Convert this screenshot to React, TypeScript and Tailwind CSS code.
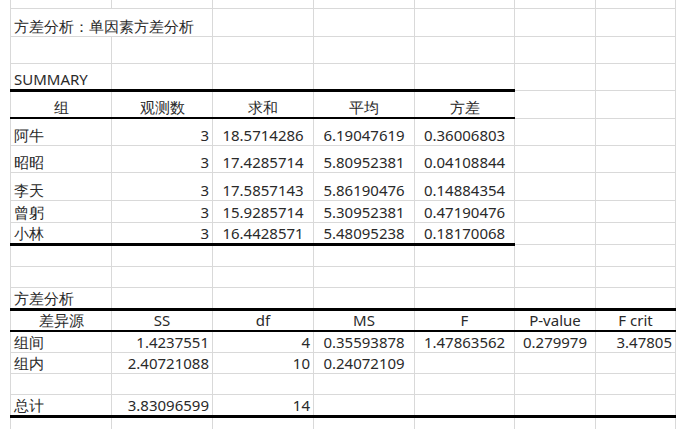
import React from "react";

const W = ["w-[101px]", "w-[101px]", "w-[101px]", "w-[101px]", "w-[100px]", "w-[81px]", "w-[80px]"];
type C = { t?: string; a?: "l" | "r" | "c" };
const L = (t: string): C => ({ t, a: "l" });
const R = (t: string): C => ({ t, a: "r" });
const M = (t: string): C => ({ t, a: "c" });

const rows: { h: string; c: C[]; b?: number; bw?: 1 | 2 }[] = [
  { h: "h-[8px]", c: [] },
  { h: "h-[28px]", c: [L("方差分析：单因素方差分析")] },
  { h: "h-[27px]", c: [] },
  { h: "h-[27px]", c: [L("SUMMARY")], b: 5, bw: 2 },
  { h: "h-[28px]", c: [M("组"), M("观测数"), M("求和"), M("平均"), M("方差")], b: 5, bw: 1 },
  { h: "h-[27px]", c: [L("阿牛"), R("3"), M("18.5714286"), M("6.19047619"), M("0.36006803")] },
  { h: "h-[27px]", c: [L("昭昭"), R("3"), M("17.4285714"), M("5.80952381"), M("0.04108844")] },
  { h: "h-[28px]", c: [L("李天"), R("3"), M("17.5857143"), M("5.86190476"), M("0.14884354")] },
  { h: "h-[22px]", c: [L("曾躬"), R("3"), M("15.9285714"), M("5.30952381"), M("0.47190476")] },
  { h: "h-[22px]", c: [L("小林"), R("3"), M("16.4428571"), M("5.48095238"), M("0.18170068")], b: 5, bw: 2 },
  { h: "h-[22px]", c: [] },
  { h: "h-[21px]", c: [] },
  { h: "h-[22px]", c: [L("方差分析")], b: 7, bw: 2 },
  { h: "h-[22px]", c: [M("差异源"), M("SS"), M("df"), M("MS"), M("F"), M("P-value"), M("F crit")], b: 7, bw: 1 },
  { h: "h-[21px]", c: [L("组间"), R("1.4237551"), R("4"), M("0.35593878"), M("1.47863562"), M("0.279979"), R("3.47805")] },
  { h: "h-[21px]", c: [L("组内"), R("2.40721088"), R("10"), M("0.24072109")] },
  { h: "h-[21px]", c: [] },
  { h: "h-[22px]", c: [L("总计"), R("3.83096599"), R("14")], b: 7, bw: 2 },
  { h: "h-[13px]", c: [] },
];

export default function App() {
  return (
    <div className="w-[685px] h-[429px] overflow-hidden bg-white text-[15px] text-[#2a2a2a] font-['Liberation_Sans','Noto_Sans_CJK_SC',sans-serif]">
      <table className="ml-[10px] border-collapse table-fixed w-[665px]">
        <colgroup>
          {W.map((w, i) => (
            <col key={i} className={w} />
          ))}
        </colgroup>
        <tbody>
          {rows.map((r, ri) => (
            <tr key={ri} className={r.h}>
              {W.map((_, ci) => {
                const cell = r.c[ci];
                const thick = r.b && ci < r.b;
                const over = ri === 1 && ci === 0;
                if (ri === 1 && ci === 1) return null;
                return (
                  <td
                    key={ci}
                    colSpan={over ? 2 : 1}
                    className={[
                      "p-0 px-[3px] align-bottom leading-[19px] whitespace-nowrap overflow-visible border-l border-r border-[#d9d9d9]",
                      thick
                        ? r.bw === 2
                          ? "border-b-[3px] border-b-black"
                          : "border-b-2 border-b-black"
                        : "border-b border-b-[#d9d9d9]",
                      cell?.a === "r" ? "text-right" : cell?.a === "c" ? "text-center" : "text-left",
                    ].join(" ")}
                  >
                    {cell?.t ?? ""}
                  </td>
                );
              })}
            </tr>
          ))}
        </tbody>
      </table>
    </div>
  );
}
